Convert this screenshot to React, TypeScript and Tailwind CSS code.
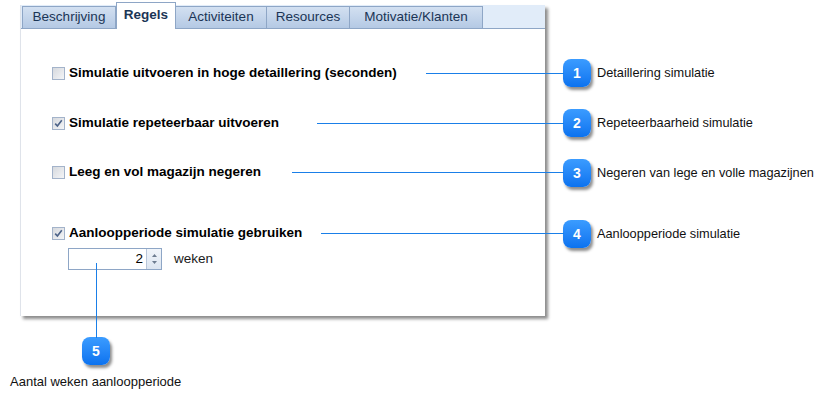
import React from 'react';

const tabs = [
  { label: 'Beschrijving', w: 'w-[94px]' },
  { label: 'Regels', w: 'w-[60px]', active: true },
  { label: 'Activiteiten', w: 'w-[92px]' },
  { label: 'Resources', w: 'w-[84px]' },
  { label: 'Motivatie/Klanten', w: 'w-[134px]' },
];

const Checkbox: React.FC<{ checked?: boolean }> = ({ checked }) => (
  <span className="flex h-[13px] w-[13px] shrink-0 items-center justify-center border border-[#a3b3ca] bg-gradient-to-br from-[#d6d9de] to-[#f4f5f7]">
    {checked && (
      <svg width="9" height="9" viewBox="0 0 9 9">
        <path d="M1.2 4.6 L3.4 7 L7.8 1.2" fill="none" stroke="#4c6288" strokeWidth="1.6" />
      </svg>
    )}
  </span>
);

const Badge: React.FC<{ n: number }> = ({ n }) => (
  <span className="flex h-[28px] w-[28px] shrink-0 items-center justify-center rounded-[8px] bg-gradient-to-b from-[#3b9cff] to-[#0a72ef] text-[14px] font-bold text-white shadow-[2px_3px_3px_rgba(0,0,0,0.45)]">
    {n}
  </span>
);

const Row: React.FC<{ label: string; checked?: boolean; w: string; mt: string }> = ({ label, checked, w, mt }) => (
  <div className={`flex h-[20px] items-start pl-[31px] ${mt}`}>
    <div className={`flex h-[20px] items-center gap-[4px] ${w}`}>
      <Checkbox checked={checked} />
      <span className="text-[13.5px] leading-[20px] font-bold text-black">{label}</span>
    </div>
    <div className="relative z-10 -mr-[19px] mt-[10px] h-0 flex-1 border-t border-[#1a7fe8]" />
  </div>
);

const callouts = [
  { n: 1, text: 'Detaillering simulatie', mt: 'mt-0' },
  { n: 2, text: 'Repeteerbaarheid simulatie', mt: 'mt-[22px]' },
  { n: 3, text: 'Negeren van lege en volle magazijnen', mt: 'mt-[22px]' },
  { n: 4, text: 'Aanloopperiode simulatie', mt: 'mt-[33px]' },
];

export default function App() {
  return (
    <div className="h-[402px] w-[829px] overflow-hidden bg-white font-['Liberation_Sans',Arial,sans-serif]">
      <div className="flex items-start">
        <div className="ml-[20px] mt-[5px] flex h-[311px] w-[525px] flex-col border-l border-[#dfe3ea] bg-white shadow-[3px_3px_3px_rgba(0,0,0,0.45)]">
          <div className="flex h-[24px] shrink-0 items-end border-b border-[#8ea6c6] bg-[#e1ecf9] pl-[1px]">
            {tabs.map((t) =>
              t.active ? (
                <div
                  key={t.label}
                  className={`-mb-px flex h-[27px] ${t.w} items-center justify-center border border-b-0 border-[#8ea6c6] bg-white pb-[2px] text-[13.5px] font-bold text-[#1b3556]`}
                >
                  {t.label}
                </div>
              ) : (
                <div
                  key={t.label}
                  className={`flex h-[22px] ${t.w} -ml-px items-center justify-center border border-b-0 border-[#8ea6c6] bg-gradient-to-b from-[#d3e0f1] to-[#b4c9e4] text-[13.5px] text-[#1b3556] first:ml-0`}
                >
                  {t.label}
                </div>
              )
            )}
          </div>
          <div className="flex flex-1 flex-col pt-[34px]">
            <Row label="Simulatie uitvoeren in hoge detaillering (seconden)" w="w-[374px]" mt="mt-0" />
            <Row label="Simulatie repeteerbaar uitvoeren" checked w="w-[265px]" mt="mt-[30px]" />
            <Row label="Leeg en vol magazijn negeren" w="w-[240px]" mt="mt-[29px]" />
            <Row label="Aanloopperiode simulatie gebruiken" checked w="w-[269px]" mt="mt-[41px]" />
            <div className="ml-[47px] mt-[5px] flex items-center gap-[12px]">
              <div className="relative flex h-[22px] w-[94px] border border-[#8ea6c6] bg-white">
                <div className="flex flex-1 items-center justify-end pr-[3px] text-[13.5px] text-black">2</div>
                <div className="flex w-[15px] flex-col items-center justify-center gap-[4px] border-l border-[#b9c7da] bg-gradient-to-b from-[#f1f5fa] to-[#dce5f0]">
                  <svg width="5" height="3" viewBox="0 0 5 3"><path d="M0 3 L2.5 0 L5 3 Z" fill="#6d7c90" /></svg>
                  <svg width="5" height="3" viewBox="0 0 5 3"><path d="M0 0 L2.5 3 L5 0 Z" fill="#6d7c90" /></svg>
                </div>
                <div className="absolute left-[27px] top-[14px] z-10 h-[75px] w-0 border-l border-[#1a7fe8]" />
              </div>
              <span className="text-[13.5px] text-[#1a1a1a]">weken</span>
            </div>
          </div>
        </div>
        <div className="ml-[18px] mt-[59px] flex flex-col">
          {callouts.map((c) => (
            <div key={c.n} className={`flex items-center gap-[6px] ${c.mt}`}>
              <Badge n={c.n} />
              <span className="text-[12.75px] text-[#111]">{c.text}</span>
            </div>
          ))}
        </div>
      </div>
      <div className="ml-[82px] mt-[21px] flex">
        <Badge n={5} />
      </div>
      <div className="ml-[10px] mt-[7px] text-[13px] text-[#111]">Aantal weken aanloopperiode</div>
    </div>
  );
}
